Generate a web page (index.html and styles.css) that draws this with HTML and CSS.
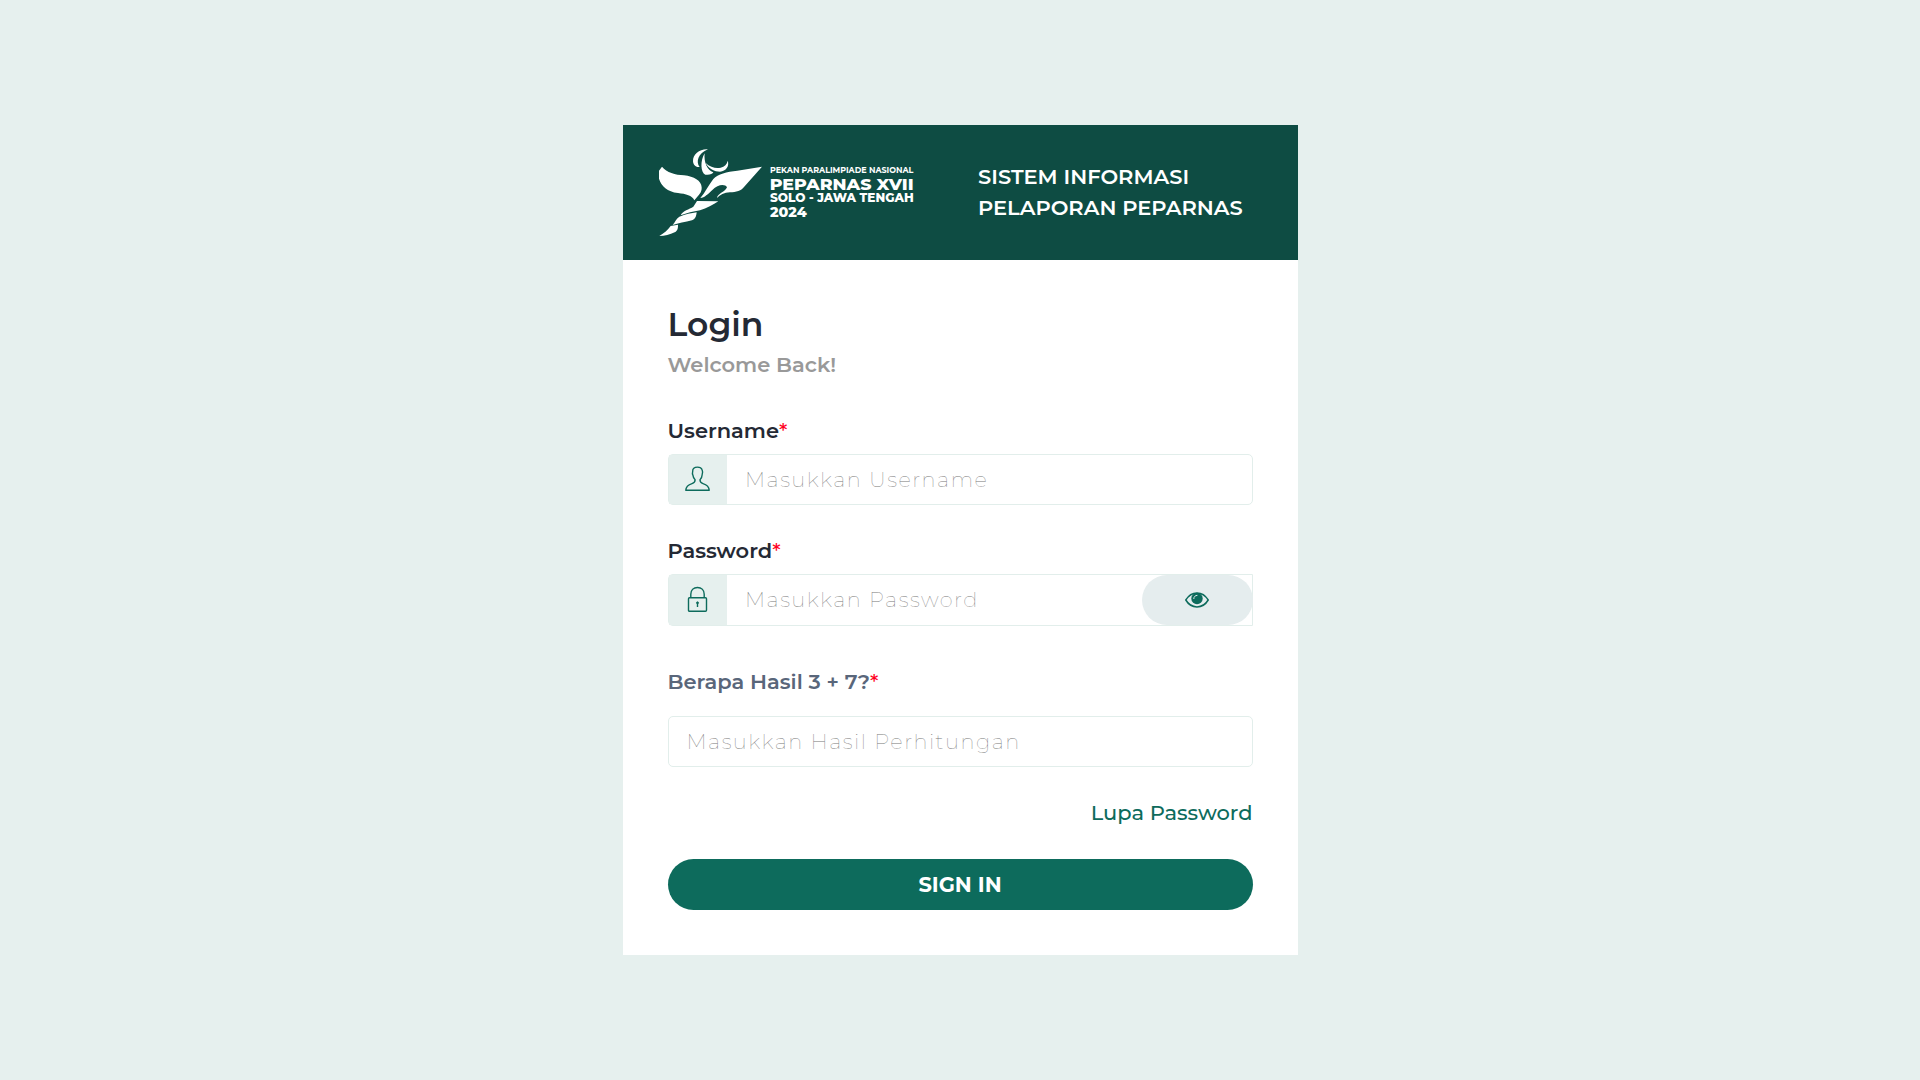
FILE: index.html
```
<!DOCTYPE html>
<html lang="id">
<head>
<meta charset="utf-8">
<title>Login</title>
<link rel="stylesheet" href="styles.css">
</head>
<body>
<main class="card">
  <header class="banner">
    <svg class="logo" viewBox="27 24 765 270" role="img" aria-label="Peparnas XVII">
      <g fill="#fff">
        <path d="M36 80C50 98 76 104 102 106C132 110 154 122 155 142C156 158 146 166 133 181C126 166 108 162 84 159C52 155 34 138 27 116V92Z"/>
        <path d="M336 80L284 139C274 153 258 157 240 157C222 158 210 164 201 174C203 160 226 156 231 142C226 132 204 132 187 150C174 162 164 173 151 174C166 156 176 136 190 117C204 102 230 95 262 92Z"/>
        <path d="M141 183L205 184C190 194 170 206 150 211C130 214 110 219 92 226C98 212 118 208 130 200Z"/>
        <path d="M140 217C139 228 136 238 126 241C106 246 84 250 68 255C76 246 78 236 88 230C106 222 124 220 140 217Z"/>
        <path d="M84 254C84 264 84 271 74 277C60 284 44 288 28 288C42 280 54 270 62 258Z"/>
        <path d="M174 28C150 26 128 42 129 64C130 75 137 83 149 81C137 66 144 40 174 28Z"/>
        <path d="M164 40C150 62 152 98 166 104C176 106 188 103 190 97C172 92 161 66 164 40Z"/>
        <path d="M233 62C239 78 228 93 210 95C194 95 176 86 166 68C182 82 198 87 212 83C224 80 231 73 233 62Z"/>
      </g>
      <g class="logo-text" fill="#fff">
        <text class="thin" x="360" y="100" font-size="26" textLength="430" lengthAdjust="spacingAndGlyphs">PEKAN PARALIMPIADE NASIONAL</text>
        <text x="359" y="149" font-size="50" textLength="432" lengthAdjust="spacingAndGlyphs">PEPARNAS XVII</text>
        <text x="360" y="187" font-size="36" textLength="431" lengthAdjust="spacingAndGlyphs">SOLO - JAWA TENGAH</text>
        <text x="360" y="231" font-size="44" textLength="110" lengthAdjust="spacingAndGlyphs">2024</text>
      </g>
    </svg>
    <p class="system">SISTEM INFORMASI<br>PELAPORAN PEPARNAS</p>
  </header>
  <form class="form">
    <h1 class="title">Login</h1>
    <p class="welcome">Welcome Back!</p>
    <label class="label user-label">Username<span class="star">*</span></label>
    <div class="field">
      <span class="addon">
        <svg width="25" height="26" viewBox="0 0 25 26" fill="none" stroke="#0d6b5c" stroke-width="1.4" stroke-linejoin="round"><path d="M.8 24.3H24.2C24 20.5 21.4 18.6 18 17.6C15.4 16.8 14.9 16 15 13.8C16.4 12.6 17 11 17.1 9C18 7 17.7 5 17 3.5C16.4 1.6 14.9 1.1 12.5 1.1C9.2 1.1 7.5 2.8 7.7 5.4C7.2 7.2 7.4 8.2 7.9 9.2C8.1 11 8.7 12.6 10.1 13.8C10.2 16 9.6 16.8 7 17.6C3.6 18.6 1 20.5 .8 24.3Z"/></svg>
      </span>
      <span class="placeholder">Masukkan Username</span>
    </div>
    <label class="label pass-label">Password<span class="star">*</span></label>
    <div class="field pass-field">
      <span class="addon">
        <svg width="25" height="26" viewBox=".5 0 25 26" fill="none" stroke="#0d6b5c" stroke-width="1.4"><rect x="4" y="11.7" width="18" height="13.6" rx="1"/><path d="M6.3 11.7V8.3C6.3 4 9.2 1.5 13 1.5S19.7 4 19.7 8.3V11.7"/><path d="M13 17V21"/><circle cx="13" cy="16.8" r="1" fill="#0d6b5c" stroke-width=".8"/></svg>
      </span>
      <span class="placeholder">Masukkan Password</span>
      <span class="reveal">
        <svg width="24" height="16" viewBox="0 0 24 16"><path d="M.8 8C3.5 3.4 7.4 .9 12 .9S20.5 3.4 23.2 8C20.5 12.6 16.6 14.9 12 14.9S3.5 12.6 .8 8Z" fill="none" stroke="#0d6b5c" stroke-width="1.5"/><circle cx="12" cy="6.5" r="5.7" fill="#0d6b5c"/><path d="M8.8 6.6C8.8 4.8 10 3.5 12 3.4" fill="none" stroke="#e5edee" stroke-width="1" stroke-linecap="round"/></svg>
      </span>
    </div>
    <label class="label sum-label">Berapa Hasil 3 + 7?<span class="star">*</span></label>
    <div class="field sum-field"><span class="placeholder">Masukkan Hasil Perhitungan</span></div>
    <a class="forgot">Lupa Password</a>
    <button class="submit" type="button">SIGN IN</button>
  </form>
</main>
</body>
</html>
```
FILE: styles.css
```
* { box-sizing: border-box; }
body {
  margin: 0;
  min-height: 1080px;
  padding-top: 125px;
  background: #e6f0ee;
  font-family: Montserrat, Inter, "Open Sans", sans-serif;
  font-size: 21px;
  color: #242934;
}
.card { width: 675px; height: 830px; margin: 0 auto; background: #fff; }
.banner { display: flex; height: 135px; padding: 23px 36px; background: #0e4c43; color: #fff; }
.logo { display: block; flex: none; width: 255px; height: 90px; overflow: visible; }
.logo-text { font-family: Montserrat, Lato, sans-serif; font-weight: 800; }
.logo-text .thin { font-weight: 700; }
.system { margin: 13px 0 0 64.5px; line-height: 31px; font-weight: 600; white-space: nowrap; }
.form { display: flex; flex-direction: column; padding: 45px 45px 0; }
.title { margin: -1px 0 1px; height: 40px; line-height: 40px; font-size: 33px; font-weight: 600; }
.welcome { margin: 5px 0 0; height: 30px; line-height: 30px; font-weight: 600; color: #999; }
.label { height: 30px; line-height: 30px; font-weight: 600; white-space: nowrap; }
.user-label { margin-top: 36px; }
.star { color: #ff0022; font-weight: 500; }
.field { display: flex; height: 51px; margin-top: 8px; border: 1px solid #e2eeeb; border-radius: 5px; }
.addon { display: flex; flex: none; width: 58px; padding-bottom: 2px; align-items: center; justify-content: center; background: #e6f0ee; }
.placeholder { padding-left: 18.5px; line-height: 49px; font-weight: 100; letter-spacing: 1.5px; color: #777; white-space: nowrap; }
.pass-label { margin-top: 31px; }
.pass-field { height: 52px; border-radius: 5px 0 0 5px; }
.reveal { display: flex; width: 111px; margin: 0 -1px 0 auto; padding-bottom: 1px; align-items: center; justify-content: center; border-radius: 26px; background: #e5edee; }
.sum-label { margin-top: 41px; color: #59667a; }
.sum-field { margin-top: 19px; }
.sum-field .placeholder { padding-left: 18px; }
.forgot { align-self: flex-end; margin-top: 31px; height: 30px; line-height: 30px; color: #0d6b5c; font-weight: 500; }
.submit { height: 51px; margin-top: 31px; padding: 0; border: 0; border-radius: 26px; background: #0d6b5c; color: #fff; font: inherit; font-weight: 700; }
```
